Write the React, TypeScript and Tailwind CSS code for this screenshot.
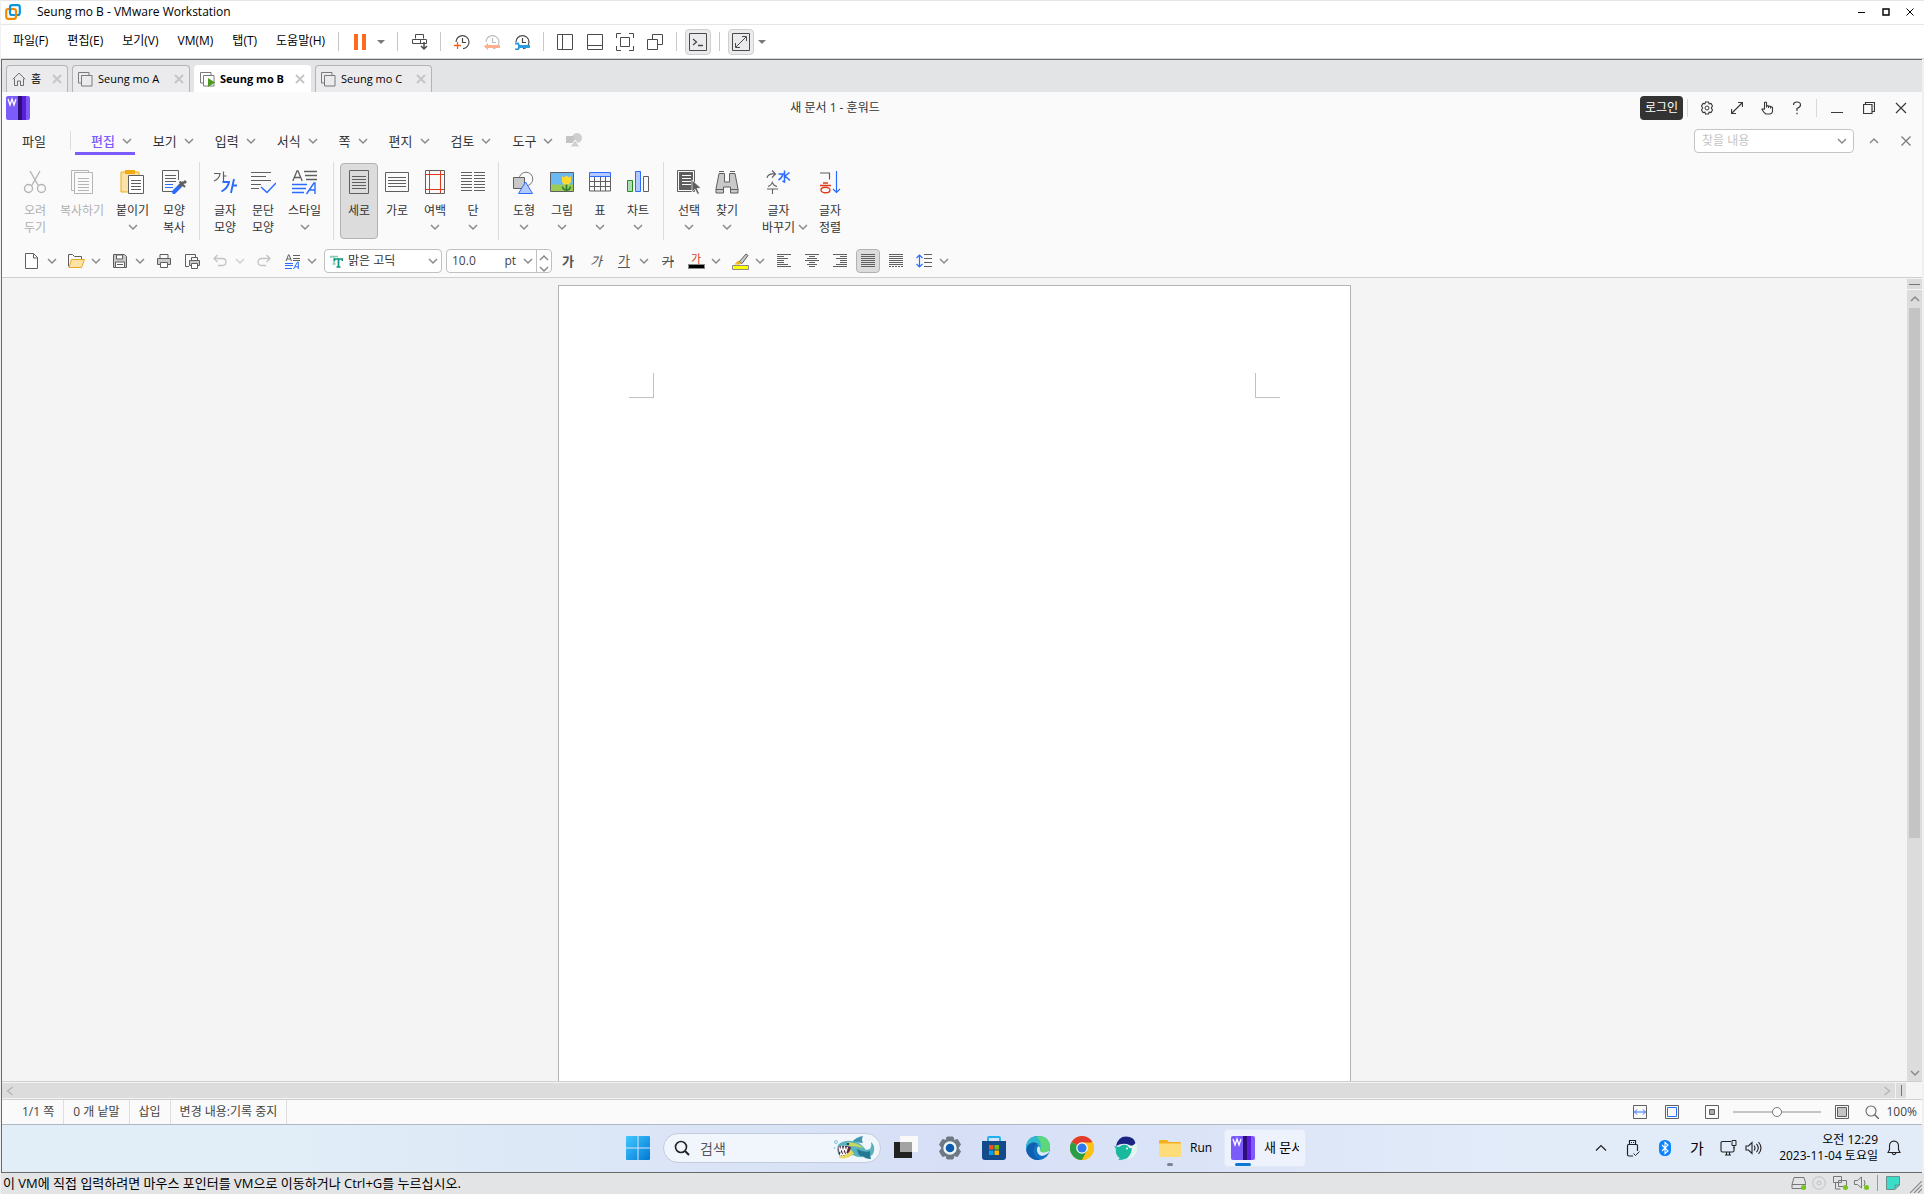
import type { ReactNode } from 'react';
import clsx from 'clsx';

const G = '#5f5f5f';
const BLUE = '#2b6cff';

type IconProps = { w?: number; h?: number; children: ReactNode; className?: string };

function Icon({ w = 16, h = w, children, className }: IconProps) {
  return (
    <svg width={w} height={h} viewBox={`0 0 ${w} ${h}`} fill="none" className={clsx('shrink-0', className)} aria-hidden>
      {children}
    </svg>
  );
}

function Chevron({ color = '#8a8a8a', up = false, className }: { color?: string; up?: boolean; className?: string }) {
  return (
    <Icon w={16} className={className}>
      <path d={up ? 'M4 10l4-4 4 4' : 'M4 6l4 4 4-4'} stroke={color} strokeWidth="1.5" />
    </Icon>
  );
}

function Lines({ x, w, ys, color = G }: { x: number; w: number; ys: number[]; color?: string }) {
  return <path d={ys.map((y) => `M${x} ${y}h${w}`).join('')} stroke={color} />;
}

function WordLogo() {
  return (
    <Icon w={24}>
      <rect width="24" height="24" rx="2" fill="#7b5cfa" />
      <path d="M12 0h4v24h-4z" fill="#2e0f78" />
      <path d="M16 0h4v24h-4z" fill="#5a1ed8" />
      <path d="M2 3l2 6 2-6 2 6 2-6" stroke="#fff" strokeWidth="1.3" />
    </Icon>
  );
}

/* ---------- VMware frame ---------- */

function VmLogo() {
  return (
    <Icon w={16}>
      <rect x="5" y="1.2" width="9.8" height="9.8" rx="2" stroke="#0c95d8" strokeWidth="2.2" />
      <rect x="1.2" y="5" width="9.8" height="9.8" rx="2" stroke="#f38b00" strokeWidth="2.2" />
      <path d="M5 8V4" stroke="#0c95d8" strokeWidth="2.2" />
    </Icon>
  );
}

function VmTitleBar() {
  return (
    <header className="flex h-[25px] items-center border-t border-b border-[#e6e6e6] bg-white pr-[2px] pb-px pl-[4px]">
      <VmLogo />
      <h1 className="flex-1 pl-4 text-[12px] leading-4 text-black">Seung mo B - VMware Workstation</h1>
      <button aria-label="최소화" className="grid h-5 w-6 place-items-center">
        <Icon w={8}><path d="M0 4.5h7" stroke="#000" /></Icon>
      </button>
      <button aria-label="최대화" className="grid h-5 w-6 place-items-center">
        <Icon w={8}><path d="M1 1h6v6H1z" stroke="#000" strokeWidth="1.4" /></Icon>
      </button>
      <button aria-label="닫기" className="grid h-5 w-6 place-items-center">
        <Icon w={8}><path d="M.5.5l7 7m0-7l-7 7" stroke="#000" /></Icon>
      </button>
    </header>
  );
}

const VM_MENUS = ['파일(F)', '편집(E)', '보기(V)', 'VM(M)', '탭(T)', '도움말(H)'];

function VmSep() {
  return <span className="h-[19px] w-px bg-[#c8c8c8]" />;
}

function Caret() {
  return (
    <Icon w={8} h={6}><path d="M0 1h8L4 5z" fill="#7a7a7a" /></Icon>
  );
}

function Clock({ color, children }: { color: string; children: ReactNode }) {
  return (
    <Icon w={16}>
      <path d="M2 8a6.5 6.5 0 1 1 7 6.6M8.500 4v4.500h3.500" stroke={color} strokeWidth="1.2" />
      {children}
    </Icon>
  );
}

function VmButton({ label, boxed, children }: { label: string; boxed?: boolean; children: ReactNode }) {
  return (
    <button
      aria-label={label}
      className={clsx('grid h-[26px] place-items-center', boxed ? 'w-[26px] rounded-[4px] border border-[#cfcfcf] bg-[#ebebed]' : 'w-[30px]')}
    >
      {children}
    </button>
  );
}

function VmMenuBar() {
  const s = '#4a4a4a';
  return (
    <div className="flex h-[34px] items-center border-b border-[#d8d8d8] bg-white pl-3">
      <nav className="flex w-[325px] gap-[19px] pb-px text-[12px] leading-4 text-black">
        {VM_MENUS.map((m) => (
          <button key={m} className="whitespace-nowrap">{m}</button>
        ))}
      </nav>
      <VmSep />
      <div className="flex w-[58px] items-center gap-[10px] pl-[14px]">
        <button aria-label="일시 중단">
          <Icon w={14} h={16}><path d="M1 0h4v16H1zM9 0h4v16H9z" fill="#ff6a1c" /></Icon>
        </button>
        <button aria-label="전원 옵션"><Caret /></button>
      </div>
      <VmSep />
      <div className="flex w-[42px] justify-center">
        <VmButton label="Ctrl+Alt+Del 보내기">
          <Icon w={17} h={18}>
            <path d="M4.500 5.500v-4h8v4M1.500 6.500h8v4h-8zM9.500 6.500h6v4h-6z" stroke={s} />
            <path d="M13 9v6m-3-2l3 3 3-3" stroke={s} strokeWidth="1.500" />
          </Icon>
        </VmButton>
      </div>
      <VmSep />
      <div className="flex w-[102px] justify-center">
        <VmButton label="스냅샷 생성">
          <Clock color={s}><path d="M0 11.500h7M3.500 8v7" stroke="#f5601e" strokeWidth="1.300" /></Clock>
        </VmButton>
        <VmButton label="스냅샷으로 되돌리기">
          <Clock color="#bdbdbd"><path d="M0 12.500l4-3.500v2h12v3H4v2z" fill="#ffb08a" /></Clock>
        </VmButton>
        <VmButton label="스냅샷 관리">
          <Clock color={s}>
            <path d="M4 12.500h12" stroke="#2c9be0" strokeWidth="3" />
            <path d="M1 9.500h3l1.500 3-1.500 3H1" stroke="#2c9be0" strokeWidth="2" />
          </Clock>
        </VmButton>
      </div>
      <VmSep />
      <div className="flex w-[132px] justify-center">
        <VmButton label="라이브러리">
          <Icon w={16}><path d="M.5.500h15v15H.500zM5.500 1v15" stroke={s} /></Icon>
        </VmButton>
        <VmButton label="축소판">
          <Icon w={16}><path d="M.5.500h15v15H.500zM1 11.500h15" stroke={s} /></Icon>
        </VmButton>
        <VmButton label="전체 화면">
          <Icon w={18}>
            <path d="M.5 5V.500H5M13 .500h4.500V5M17.500 13v4.500H13M5 17.500H.500V13M4.500 4.500h9v9h-9z" stroke={s} />
          </Icon>
        </VmButton>
        <VmButton label="유니티">
          <Icon w={16}><path d="M.5 5.500h10v10H.500zM5.500 5V.500h10v10H11" stroke={s} /></Icon>
        </VmButton>
      </div>
      <VmSep />
      <div className="flex w-[42px] justify-center">
        <VmButton label="콘솔 보기" boxed>
          <Icon w={18}>
            <path d="M.5.500h17v17H.500z" stroke={s} />
            <path d="M4 6l3.500 3L4 12M9 12.500h5" stroke={s} strokeWidth="1.300" />
          </Icon>
        </VmButton>
      </div>
      <VmSep />
      <div className="flex items-center gap-1 pl-2">
        <VmButton label="게스트 늘이기" boxed>
          <Icon w={18}>
            <path d="M.5.500h17v17H.500z" stroke={s} />
            <path d="M10 3.500h4.500V8M8 14.500H3.500V10M4 14L14 4" stroke={s} />
          </Icon>
        </VmButton>
        <button aria-label="늘이기 옵션"><Caret /></button>
      </div>
    </div>
  );
}

const VM_TABS = [
  { label: '홈', width: 'w-[62px]', kind: 'home' },
  { label: 'Seung mo A', width: 'w-[118px]', kind: 'vm' },
  { label: 'Seung mo B', width: 'w-[117px]', kind: 'running' },
  { label: 'Seung mo C', width: 'w-[117px]', kind: 'vm' },
];

function VmTabs() {
  return (
    <div className="flex h-[32px] items-end gap-1 bg-[#e3e4e6] pl-1">
      {VM_TABS.map((t) => {
        const active = t.kind === 'running';
        return (
          <div
            key={t.label}
            className={clsx(
              'flex h-[27px] items-center rounded-t-[4px] border border-b-0 px-[5px]',
              t.width,
              active ? 'border-white bg-white' : 'border-[#b4b4b8] bg-[#ebebed]',
            )}
          >
            {t.kind === 'home' ? (
              <Icon w={14}>
                <path d="M.7 7.300L7 1.200l6.300 6.100M2.500 6.500v7h3v-4.500h3v4.500h3v-7" stroke="#6e6e6e" />
              </Icon>
            ) : (
              <Icon w={15}>
                <path d="M3.500 11H.500V.500H11V3M3.500 3.500h10.500v10.500H3.500z" stroke="#7a7a7a" />
                {active && <path d="M8 6l7 4.500L8 15z" fill="#4c9a1f" />}
              </Icon>
            )}
            <button
              className={clsx(
                'flex-1 pl-[5px] text-left text-[11px] leading-4 whitespace-nowrap text-black',
                active && 'font-bold',
              )}
            >
              {t.label}
            </button>
            <button aria-label={`${t.label} 닫기`}>
              <Icon w={10}><path d="M1 1l8 8m0-8L1 9" stroke="#c6c6c6" strokeWidth="2" /></Icon>
            </button>
          </div>
        );
      })}
    </div>
  );
}

/* ---------- Word processor header ---------- */

function WinButton({ label, children }: { label: string; children: ReactNode }) {
  return (
    <button aria-label={label} className="grid h-6 w-[30px] place-items-center">
      {children}
    </button>
  );
}

function DocTitleBar() {
  const s = '#3a3a3a';
  return (
    <div className="flex h-[32px] items-center pr-[5px] pl-1">
      <WordLogo />
      <h2 className="flex-1 text-center text-[12px] leading-4 text-[#333]">새 문서 1 - 훈워드</h2>
      <button className="h-6 w-[43px] rounded-[4px] bg-[#333] text-[12px] leading-4 text-white">로그인</button>
      <span className="mr-1 ml-1 h-[18px] w-px bg-[#d9d9d9]" />
      <WinButton label="설정">
        <Icon w={14}>
          <path d="M5.500 1h3l.6 1.800 1.900-.4 1.500 2.500L11.300 7l1.200 2.100-1.500 2.500-1.900-.4-.6 1.800h-3l-.6-1.800-1.900.4L1.500 9.100 2.700 7 1.500 4.900 3 2.400l1.900.4z" stroke={s} strokeWidth="1.100" />
          <circle cx="7" cy="7" r="2" stroke={s} />
        </Icon>
      </WinButton>
      <WinButton label="전체 화면">
        <Icon w={12}><path d="M7 .500h4.500V5M5 11.500H.500V7M1 11L11 1" stroke={s} strokeWidth="1.200" /></Icon>
      </WinButton>
      <WinButton label="터치 모드">
        <Icon w={14}>
          <path d="M4.500 8.500v-7q1-1 2 0v5M6.500 5q1-.8 2 0v2M8.500 5.500q1-.8 2 0v2M10.500 6q1.500-.5 2 .500v4q-.5 2.500-3 2.500H6Q4 12 2 8.500q-.5-1.500 2.500 0" stroke={s} strokeWidth="1.100" />
        </Icon>
      </WinButton>
      <WinButton label="도움말">
        <Icon w={10} h={14}>
          <path d="M1.500 4Q1.500 1 5 1t3.500 3Q8.500 6 5 7.500V10" stroke={s} strokeWidth="1.200" />
          <path d="M5 11.800v1.500" stroke={s} strokeWidth="1.300" />
        </Icon>
      </WinButton>
      <span className="mr-1 ml-1 h-[18px] w-px bg-[#d9d9d9]" />
      <button aria-label="최소화" className="grid h-6 w-8 place-items-center">
        <Icon w={12}><path d="M0 10.500h12" stroke={s} /></Icon>
      </button>
      <button aria-label="이전 크기로" className="grid h-6 w-8 place-items-center">
        <Icon w={12}><path d="M.5 2.500h8.500v9H.500zM2.500 2V.500h9v9H9.500" stroke={s} strokeWidth="1.200" /></Icon>
      </button>
      <button aria-label="닫기" className="grid h-6 w-8 place-items-center">
        <Icon w={12}><path d="M1 1l10 10m0-10L1 11" stroke={s} strokeWidth="1.200" /></Icon>
      </button>
    </div>
  );
}

const DOC_MENUS = ['편집', '보기', '입력', '서식', '쪽', '편지', '검토', '도구'];

function DocMenuBar() {
  return (
    <div className="flex h-[33px] items-center text-[13px] leading-4 text-[#333]">
      <button className="pr-6 pl-5">파일</button>
      <span className="mr-1 h-[19px] w-px bg-[#dcdcdc]" />
      <nav className="flex items-center gap-[2px]">
        {DOC_MENUS.map((m, i) => (
          <button
            key={m}
            className={clsx(
              'flex h-[28px] items-center gap-1 border-t-[3px] border-b-[3px] border-t-transparent pl-4',
              i === 0 ? 'border-b-[#7c5cfc] font-medium text-[#7c5cfc]' : 'border-b-transparent',
            )}
          >
            <span>{m}</span>
            <Chevron />
          </button>
        ))}
      </nav>
      <Icon w={16} className="ml-[10px]">
        <circle cx="11" cy="5" r="5" fill="#cfcfcf" />
        <path d="M0 3h8v7H0z" fill="#c4c4c4" />
        <path d="M9 7l5 7H4z" fill="#cfcfcf" stroke="#fafafa" />
      </Icon>
      <div className="flex flex-1 items-center justify-end">
        <label className="flex h-6 w-[160px] items-center rounded-[4px] border border-[#c4c4c4] bg-white pr-[3px]">
          <input
            aria-label="찾을 내용"
            placeholder="찾을 내용"
            className="min-w-0 flex-1 pl-[7px] text-[12px] outline-none placeholder:text-[#c4c4c4]"
          />
          <Chevron />
        </label>
        <button aria-label="리본 접기" className="grid w-10 place-items-center"><Chevron up /></button>
        <button aria-label="닫기" className="mr-1 grid w-6 place-items-center">
          <Icon w={10}><path d="M.5.500l9 9m0-9l-9 9" stroke="#777" strokeWidth="1.200" /></Icon>
        </button>
      </div>
    </div>
  );
}

/* ---------- Ribbon ---------- */

const icons: Record<string, ReactNode> = {
  cut: (
    <>
      <path d="M7 1l8.500 15M17 1L8.500 16" stroke="#b5b5b5" strokeWidth="1.400" />
      <circle cx="5.500" cy="18.500" r="4" stroke="#b5b5b5" strokeWidth="1.400" />
      <circle cx="18.500" cy="18.500" r="4" stroke="#b5b5b5" strokeWidth="1.400" />
    </>
  ),
  copy: (
    <>
      <path d="M4.500 20.500h-3V.500h17v2M4.500 2.500h18v21h-18z" stroke="#b5b5b5" />
      <Lines x={8} w={11} ys={[8.5, 11.5, 14.5, 17.5, 20.5]} color="#b5b5b5" />
    </>
  ),
  paste: (
    <>
      <path d="M1 2h18v20H1z" fill="#fbe3a8" stroke="#f0ab14" />
      <path d="M5 0h10v4H5z" fill="#f0ab14" />
      <path d="M8.500 5.500h15v18h-15z" fill="#fff" stroke={G} />
      <Lines x={11} w={10} ys={[10.5, 13.5, 16.5, 19.5]} />
    </>
  ),
  brush: (
    <>
      <path d="M16.500 10V.500H.500v21H11" stroke={G} />
      <Lines x={3} w={11} ys={[5.5, 8.5, 11.5]} />
      <Lines x={3} w={8} ys={[14.5, 17.5]} color={BLUE} />
      <path d="M12 22l7-7" stroke={BLUE} strokeWidth="4" strokeLinecap="round" />
      <path d="M17 16.500l4.500-4.500M22 13l2-2" stroke={G} strokeWidth="3" />
      <path d="M17.500 11.500l5.500 5.500" stroke={G} strokeWidth="2" />
    </>
  ),
  charShape: (
    <>
      <path d="M1 3.500h6Q6.500 9 1 11M10.500 1.500v10M10.500 6h3" stroke={G} strokeWidth="1.200" />
      <path d="M9.500 12h6.500Q15 18 8.500 21.500M21 9l-3 14M20 15.500h4" stroke={BLUE} strokeWidth="1.900" />
    </>
  ),
  paraShape: (
    <>
      <path d="M0 2.500h20M0 6.500h15M0 10.500h20M0 14.500h10M0 18.500h8" stroke={G} />
      <path d="M10 17l6 5.500L25 13" stroke={BLUE} strokeWidth="1.500" />
    </>
  ),
  style: (
    <>
      <path d="M.8 11L5 1h1l4.200 10M2.500 7.500h6.500M12 1.500h13M13 5.500h12M14 9.500h11" stroke={G} strokeWidth="1.300" />
      <path d="M0 14.500h15M0 18.500h14M0 22.500h12M14.500 24L22 13h1v11M17.500 20h5.500" stroke={BLUE} strokeWidth="1.400" />
    </>
  ),
  portrait: (
    <>
      <path d="M2.500.500h19v23h-19z" stroke={G} />
      <Lines x={5} w={14} ys={[6.5, 9.5, 12.5, 15.5, 18.5]} />
    </>
  ),
  landscape: (
    <>
      <path d="M.5 2.500h23v19H.500z" stroke={G} />
      <Lines x={3} w={18} ys={[7.5, 10.5, 13.5, 16.5]} />
    </>
  ),
  margin: (
    <>
      <path d="M2.500.500h19v23h-19z" stroke={G} />
      <path d="M6.500 1v22M17.500 1v22M3 4.500h18M3 19.500h18" stroke="#dd3b1e" />
    </>
  ),
  columns: (
    <>
      <Lines x={0} w={11} ys={[2.5, 5.5, 8.5, 11.5, 14.5, 17.5, 20.5]} />
      <Lines x={13} w={11} ys={[2.5, 5.5, 8.5, 11.5, 14.5, 17.5, 20.5]} />
    </>
  ),
  shapes: (
    <>
      <circle cx="14" cy="9" r="6.800" stroke="#777" />
      <path d="M1.500 7.500h11v11h-11z" fill="#c9c9c9" stroke={G} />
      <path d="M13.500 12l7 11.500h-14z" fill="#b4caff" stroke={BLUE} />
    </>
  ),
  picture: (
    <>
      <path d="M.5 2.500h23v19H.500z" fill="#6bb9f2" stroke={G} />
      <path d="M1 14.500h22V21H1z" fill="#9ccc55" />
      <path d="M16.500 12v9M12.500 16.500q.500 3.500 4 3.500t4-3.500" stroke="#2b7a2b" strokeWidth="1.600" />
      <path d="M12 6l2 1.500 2.500-2 2.500 2L21 6v6l-2 2.500h-5L12 12z" fill="#ffd92e" />
    </>
  ),
  table: (
    <>
      <path d="M1.500 6.500h21v14.500h-21zM6.500 7v14M12.500 7v14M17.500 7v14M2 11.500h20M2 16.500h20" stroke={G} />
      <path d="M1.500 2.500h21v4h-21z" fill="#b4caff" stroke={BLUE} />
    </>
  ),
  chart: (
    <>
      <path d="M1.500 10.500h5v11h-5z" fill="#b4dcb4" stroke="#1f8f1f" />
      <path d="M9.500 1.500h5v20h-5z" fill="#b4caff" stroke={BLUE} />
      <path d="M17.500 6.500h5v15h-5z" stroke={G} />
    </>
  ),
  select: (
    <>
      <path d="M.5.500h17v21H.500z" stroke={G} />
      <path d="M2 2h14v18H2z" fill={G} />
      <Lines x={5} w={9} ys={[5.5, 8.5, 11.5, 14.5]} color="#fff" />
      <path d="M15 10l9 8-4 .500 2.500 5-2 .800-2.500-5-3 2.700z" fill={G} stroke="#fafafa" strokeWidth=".7" />
    </>
  ),
  find: (
    <path d="M4 1.500h5M15 1.500h5M4 3.500h5.500V12h5V3.500H20L23 19v4h-7.500v-6h-7v6H1v-4zM1 19.500h7.500M15.500 19.500H23" fill="#c9c9c9" stroke={G} />
  ),
  hanja: (
    <>
      <path d="M1 8Q2 3 9 4M6 .500L9.500 4 6 7.500M1 19h11M6.500 19v5M6.500 11.500Q6 15 2 16.500M6.500 13q1 2.500 4.500 3.500" stroke={G} strokeWidth="1.100" />
      <path d="M18.500.500v11.500l-2-1M12.500 4h4.500q-1 4-4.500 6M23.500 2.500L19 6l5 4.500" stroke={BLUE} strokeWidth="1.500" />
    </>
  ),
  sort: (
    <>
      <path d="M2 3h9.500v6.500" stroke={G} strokeWidth="1.200" />
      <path d="M5 13h5M2 15.500h11" stroke="#dd3b1e" strokeWidth="1.300" />
      <ellipse cx="7.500" cy="20" rx="4.500" ry="2.800" stroke="#dd3b1e" strokeWidth="1.400" />
      <path d="M18.500 1v21M15 19l3.500 3.500L22 19" stroke={BLUE} strokeWidth="1.200" />
    </>
  ),
};

type RibbonItem = {
  icon: string;
  lines: [string, string?];
  width?: string;
  disabled?: boolean;
  active?: boolean;
  menu?: boolean;
};

const RIBBON: RibbonItem[][] = [
  [
    { icon: 'cut', lines: ['오려', '두기'], disabled: true },
    { icon: 'copy', lines: ['복사하기'], width: 'w-[56px]', disabled: true },
    { icon: 'paste', lines: ['붙이기'], width: 'w-[45px]', menu: true },
    { icon: 'brush', lines: ['모양', '복사'] },
  ],
  [
    { icon: 'charShape', lines: ['글자', '모양'] },
    { icon: 'paraShape', lines: ['문단', '모양'] },
    { icon: 'style', lines: ['스타일'], width: 'w-[45px]', menu: true },
  ],
  [
    { icon: 'portrait', lines: ['세로'], active: true },
    { icon: 'landscape', lines: ['가로'] },
    { icon: 'margin', lines: ['여백'], menu: true },
    { icon: 'columns', lines: ['단'], menu: true },
  ],
  [
    { icon: 'shapes', lines: ['도형'], menu: true },
    { icon: 'picture', lines: ['그림'], menu: true },
    { icon: 'table', lines: ['표'], menu: true },
    { icon: 'chart', lines: ['차트'], menu: true },
  ],
  [
    { icon: 'select', lines: ['선택'], menu: true },
    { icon: 'find', lines: ['찾기'], menu: true },
    { icon: 'hanja', lines: ['글자', '바꾸기'], width: 'w-[65px]', menu: true },
    { icon: 'sort', lines: ['글자', '정렬'] },
  ],
];

function Ribbon() {
  return (
    <div className="flex h-[87px] items-center pl-[14px]">
      {RIBBON.map((group, g) => (
        <div key={g} className="flex items-center">
          {g > 0 && <span className="mx-[6px] h-[78px] w-px bg-[#dcdcdc]" />}
          {group.map((it) => (
            <button
              key={it.icon}
              disabled={it.disabled}
              className={clsx(
                'flex h-[76px] flex-col items-center rounded-[4px] border pt-[6px] text-[12px] leading-[17px]',
                it.width ?? 'w-[38px]',
                it.active ? 'border-[#b2b2b2] bg-[#dcdcdc]' : 'border-transparent',
                it.disabled ? 'text-[#b0b0b0]' : 'text-[#333]',
              )}
            >
              <Icon w={25} className="mb-[7px]">{icons[it.icon]}</Icon>
              <span className="whitespace-nowrap">{it.lines[0]}</span>
              <span className="flex h-[17px] items-center whitespace-nowrap">
                {it.lines[1]}
                {it.menu && <Chevron className={it.lines[1] ? '-mr-4' : ''} />}
              </span>
            </button>
          ))}
        </div>
      ))}
    </div>
  );
}

/* ---------- Formatting bar ---------- */

function Tool({ label, menu, active, disabled, children }: {
  label: string;
  menu?: boolean;
  active?: boolean;
  disabled?: boolean;
  children: ReactNode;
}) {
  return (
    <div className="flex items-center">
      <button
        aria-label={label}
        disabled={disabled}
        className={clsx('grid h-6 w-6 place-items-center rounded-[4px] border text-[13px] leading-none text-[#555]', active ? 'border-[#b2b2b2] bg-[#dcdcdc]' : 'border-transparent')}
      >
        {children}
      </button>
      {menu && (
        <button aria-label={`${label} 옵션`}>
          <Chevron color={disabled ? '#cfcfcf' : undefined} />
        </button>
      )}
    </div>
  );
}

function AlignIcon({ d, dashed }: { d: string; dashed?: boolean }) {
  return (
    <Icon w={14}>
      <path d={d} stroke={G} />
      {dashed && <path d="M0 12.500h14" stroke={G} strokeDasharray="2 1" />}
    </Icon>
  );
}

function FormatBar() {
  return (
    <div className="flex h-[34px] items-center gap-1 border-b border-[#d0d0d0] pt-px pl-[18px]">
      <Tool label="새 문서" menu>
        <Icon w={14} h={16}><path d="M.5.500h8l4 4v11H.500zM8.500 1v4h4" stroke={G} fill="#fff" /></Icon>
      </Tool>
      <Tool label="열기" menu>
        <Icon w={17} h={14}>
          <path d="M.5 12.500v-12h4l2 2h7v3" stroke={G} />
          <path d="M3.500 5.500h13l-3 8H1z" fill="#fbe3a8" stroke="#e8a91c" />
        </Icon>
      </Tool>
      <Tool label="저장" menu>
        <Icon w={14}>
          <path d="M.5.500h11l2 2v11H.500z" fill="#c9c9c9" stroke={G} />
          <path d="M3.500 1h6v4h-6zM2.500 8h9v5.500h-9z" fill="#fff" stroke={G} />
          <Lines x={4} w={6} ys={[10.5]} />
        </Icon>
      </Tool>
      <Tool label="인쇄">
        <Icon w={14}>
          <path d="M3 4.500v-4h8v4" stroke={G} />
          <path d="M.5 4.500h13v6H.500z" fill="#c9c9c9" stroke={G} />
          <path d="M3.500 8.500h7v5h-7z" fill="#fff" stroke={G} />
        </Icon>
      </Tool>
      <Tool label="미리 보기">
        <Icon w={15}>
          <path d="M4 12.500H.500V.500h10V3" stroke={G} />
          <path d="M6.500 6V3.500h6V6" stroke={G} />
          <path d="M4.500 6.500h10v5h-10z" fill="#c9c9c9" stroke={G} />
          <path d="M6.500 9.500h6v5h-6z" fill="#fff" stroke={G} />
        </Icon>
      </Tool>
      <Tool label="되돌리기" menu disabled>
        <Icon w={14}><path d="M4.500 1L1 4.500 4.500 8M1 4.500h8q4 0 4 3.500t-4 3.500H5" stroke="#c4c4c4" strokeWidth="1.300" /></Icon>
      </Tool>
      <Tool label="다시 실행" disabled>
        <Icon w={14}><path d="M9.500 1L13 4.500 9.500 8M13 4.500H5Q1 4.500 1 8t4 3.500h4" stroke="#c4c4c4" strokeWidth="1.300" /></Icon>
      </Tool>
      <Tool label="스타일" menu>
        <Icon w={15}>
          <path d="M1 7L3.500.800h.5L6.500 7M2 5h4M8 1.500h7M8 4.500h7M8 6.500h7" stroke={G} />
          <path d="M0 9.500h8M0 11.500h8M0 14.500h7M8.500 15L12.500 8h.8v7M10 12.800h3.500" stroke={BLUE} />
        </Icon>
      </Tool>

      <label className="flex h-6 w-[118px] items-center rounded-[4px] border border-[#c0c0c0] bg-white pl-[5px]">
        <Icon w={13}>
          <path d="M0 1.500h8M4 1v8M1 1v2M2.500 9h3" stroke="#86cdb4" strokeWidth="1.600" />
          <path d="M4 4h9M8.500 4v8M4.500 4v2M12.500 4v2M6.500 12h4" stroke="#12917c" strokeWidth="1.700" />
        </Icon>
        <select aria-label="글꼴" className="min-w-0 flex-1 appearance-none pl-[5px] text-[12px] text-[#333] outline-none">
          <option>맑은 고딕</option>
        </select>
        <Chevron />
      </label>

      <div className="flex h-6 w-[106px] items-center rounded-[4px] border border-[#c0c0c0] bg-white text-[12px] text-[#444]">
        <input aria-label="글자 크기" defaultValue="10.0" className="min-w-0 flex-1 pl-[5px] outline-none" />
        <span>pt</span>
        <button aria-label="크기 목록" className="ml-1"><Chevron /></button>
        <span className="flex h-full w-[15px] flex-col items-center border-l border-[#c0c0c0]">
          <button aria-label="크게" className="grid h-[11px] place-items-center overflow-hidden"><Chevron up /></button>
          <button aria-label="작게" className="grid h-[11px] place-items-center overflow-hidden"><Chevron /></button>
        </span>
      </div>

      <Tool label="진하게"><b>가</b></Tool>
      <Tool label="기울임"><i>가</i></Tool>
      <Tool label="밑줄" menu><span className="border-b border-[#555]">가</span></Tool>
      <Tool label="취소선"><s>가</s></Tool>
      <Tool label="글자 색" menu>
        <span className="flex flex-col items-center text-[11px] leading-[11px] text-[#dd3b1e]">
          가
          <span className="h-[5px] w-[17px] border border-[#888] bg-black" />
        </span>
      </Tool>
      <Tool label="형광펜" menu>
        <Icon w={17} h={17}>
          <path d="M7 9l7-8 2 1.500-6 8z" fill="#c9c9c9" stroke={G} />
          <path d="M6 7.500L2.500 11.500H8L9 10z" fill="#f5b324" />
          <path d="M.5 12.500h16v4H.500z" fill="#ffff00" stroke="#8a8a8a" />
        </Icon>
      </Tool>
      <Tool label="왼쪽 정렬"><AlignIcon d="M0 .500h14M0 2.500h7M0 4.500h11M0 6.500h7M0 8.500h7M0 10.500h11M0 12.500h14" /></Tool>
      <Tool label="가운데 정렬"><AlignIcon d="M0 .500h14M4 2.500h6M2 4.500h10M0 6.500h14M4 8.500h6M2 10.500h10M4 12.500h6" /></Tool>
      <Tool label="오른쪽 정렬"><AlignIcon d="M0 .500h14M7 2.500h7M3 4.500h11M7 6.500h7M7 8.500h7M3 10.500h11M0 12.500h14" /></Tool>
      <Tool label="양쪽 정렬" active><AlignIcon d="M0 .500h14M0 2.500h14M0 4.500h14M0 6.500h14M0 8.500h14M0 10.500h14M0 12.500h14" /></Tool>
      <Tool label="배분 정렬"><AlignIcon d="M0 .500h14M0 2.500h14M0 4.500h14M0 6.500h14M0 8.500h14M0 10.500h14" dashed /></Tool>
      <Tool label="줄 간격" menu>
        <Icon w={16} h={14}>
          <path d="M3.500 1v12M.500 4l3-3 3 3M.500 10l3 3 3-3" stroke={BLUE} strokeWidth="1.200" />
          <Lines x={8} w={8} ys={[0.5, 4.5, 8.5, 12.5]} />
        </Icon>
      </Tool>
    </div>
  );
}

/* ---------- Canvas and status ---------- */

function Workspace() {
  return (
    <div className="flex min-h-0 flex-1 bg-[#f4f4f4]">
      <main className="flex flex-1 justify-center overflow-hidden pt-[7px]">
        <div className="flex w-[793px] items-start justify-between border border-b-0 border-[#b3b3b3] bg-white px-[70px] pt-[87px]">
          <span className="h-[25px] w-[25px] border-r border-b border-[#c0c0c0]" />
          <span className="h-[25px] w-[25px] border-b border-l border-[#c0c0c0]" />
        </div>
      </main>
      <div className="flex w-[15px] flex-col bg-[#dcdcdc]">
        <button aria-label="화면 나누기" className="grid h-[12px] place-items-center border-t border-b border-[#f4f4f4]">
          <span className="h-px w-[11px] bg-[#777]" />
        </button>
        <button aria-label="위로" className="grid h-[18px] place-items-center overflow-hidden"><Chevron up /></button>
        <div className="flex-1 px-[2px]"><div className="h-[70%] bg-[#c4c4c4]" /></div>
        <button aria-label="아래로" className="grid h-4 place-items-center"><Chevron /></button>
      </div>
    </div>
  );
}

function HScroll() {
  return (
    <div className="flex h-[19px] items-center border-t border-b border-[#cfcfcf] bg-[#f4f4f4] py-px">
      <div className="flex h-full flex-1 items-center justify-between bg-[#dcdcdc] px-1">
        <Icon w={8} h={10}><path d="M6.500 1L1.500 5l5 4" stroke="#b4b4b4" strokeWidth="1.300" /></Icon>
        <Icon w={8} h={10}><path d="M1.500 1l5 4-5 4" stroke="#b4b4b4" strokeWidth="1.300" /></Icon>
      </div>
      <div className="mr-4 ml-px grid h-full w-[10px] place-items-center bg-[#dcdcdc]">
        <span className="h-[11px] w-px bg-[#777]" />
      </div>
    </div>
  );
}

function StatusCell({ children, first }: { children: ReactNode; first?: boolean }) {
  return (
    <span className={clsx('flex h-full items-center border-r border-[#dedede] pr-[9px]', first ? 'pl-5' : 'pl-[9px]')}>
      {children}
    </span>
  );
}

function DocStatus() {
  return (
    <footer className="flex h-[24px] items-center bg-[#fafafa] text-[12px] leading-4 text-[#444]">
      <StatusCell first>1/1 쪽</StatusCell>
      <StatusCell>0 개 낱말</StatusCell>
      <StatusCell>삽입</StatusCell>
      <StatusCell>변경 내용:기록 중지</StatusCell>
      <div className="flex flex-1 items-center justify-end pr-[5px]">
        <button aria-label="폭 맞춤" className="mr-[18px]">
          <Icon w={14}>
            <path d="M.5.500h13v13H.500z" stroke={G} />
            <path d="M1.500 7h11M4 4.500L1.500 7 4 9.500M10 4.500L12.500 7 10 9.500" stroke={BLUE} />
          </Icon>
        </button>
        <button aria-label="쪽 맞춤" className="mr-[26px]">
          <Icon w={14}>
            <path d="M.5.500h13v13H.500z" stroke={G} />
            <path d="M2.500 2.500h9v9h-9z" stroke={BLUE} />
          </Icon>
        </button>
        <button aria-label="축소" className="mr-[14px]">
          <Icon w={14}>
            <path d="M.5.500h13v13H.500z" stroke={G} />
            <path d="M4.500 4.500h5v5h-5z" fill="#aaa" stroke={G} />
          </Icon>
        </button>
        <input
          type="range"
          aria-label="확대/축소"
          defaultValue={50}
          className="mr-[14px] h-[10px] w-[88px] appearance-none bg-transparent [&::-webkit-slider-runnable-track]:h-[2px] [&::-webkit-slider-runnable-track]:bg-[#c4c4c4] [&::-webkit-slider-thumb]:-mt-1 [&::-webkit-slider-thumb]:h-[10px] [&::-webkit-slider-thumb]:w-[10px] [&::-webkit-slider-thumb]:appearance-none [&::-webkit-slider-thumb]:rounded-full [&::-webkit-slider-thumb]:border [&::-webkit-slider-thumb]:border-[#777] [&::-webkit-slider-thumb]:bg-white"
        />
        <button aria-label="확대" className="mr-4">
          <Icon w={14}>
            <path d="M.5.500h13v13H.500z" stroke={G} />
            <path d="M2.500 2.500h9v9h-9z" fill="#c4c4c4" stroke={G} />
          </Icon>
        </button>
        <button className="flex items-center gap-[7px]">
          <Icon w={14}><circle cx="6" cy="6" r="5" stroke="#666" strokeWidth="1.100" /><path d="M9.500 9.500L14 14" stroke="#666" strokeWidth="1.500" /></Icon>
          <span className="w-[31px] text-right">100%</span>
        </button>
      </div>
    </footer>
  );
}

/* ---------- Taskbar ---------- */

function TaskIcon({ label, children }: { label: string; children: ReactNode }) {
  return (
    <button aria-label={label} className="grid h-10 w-11 place-items-center">
      {children}
    </button>
  );
}

function Fish() {
  return (
    <Icon w={42} h={24}>
      <path d="M19 6q4-5 11-6-2 4 0 7z" fill="#3f97ae" />
      <path d="M5 9Q10 4 19 5t14 9l4-1q2-3 1-7 4 3 3 9-1 6-6 5-8 3-15-1-7 3-14 0Q3 14 5 9z" fill="#5ab2be" />
      <path d="M14 6q10 0 17 6-8-2-17-2z" fill="#c3d765" />
      <path d="M24 13q7 4 13 2 0 5 1 8-6 0-8-3-5 1-6-7z" fill="#257891" />
      <path d="M5 11q6-2 13 0l-2 7q-5 4-10 1z" fill="#5d2a3d" />
      <path d="M6 11l1 5 1.500-5 1.500 5 1.500-5 1.500 5 1.500-5M7 20l1-3 1.500 3 1.500-3 1.500 3 1.500-3" stroke="#fff" strokeWidth="1.200" />
      <path d="M6 19.500q7 2 12-6l3 4q-8 7-15 4z" fill="#e6d75d" />
      <circle cx="15" cy="8" r="1.200" fill="#123f52" />
      <circle cx="3" cy="6" r="1.500" stroke="#7ec4ea" />
      <circle cx="1.500" cy="12" r="1" fill="#9cd3f0" />
    </Icon>
  );
}

function Taskbar() {
  return (
    <div className="grid h-[49px] grid-cols-[1fr_auto_1fr] items-center border-t border-b border-t-[#b0b8c4] border-b-[#6a6a6a] bg-linear-to-r from-[#e1edf7] from-15% via-[#d6dff6] via-50% to-[#e2ecf9] to-80% pr-[2px] pb-px">
      <span />
      <div className="flex items-center">
        <TaskIcon label="시작">
          <Icon w={24}>
            <defs>
              <linearGradient id="win" x1="0" y1="0" x2="1" y2="1" gradientUnits="objectBoundingBox">
                <stop stopColor="#42c8ff" /><stop offset="1" stopColor="#0078d4" />
              </linearGradient>
            </defs>
            <path d="M0 1q0-1 1-1h10.500v11.500H0zM12.500 0H23q1 0 1 1v10.500H12.500zM0 12.500h11.500V24H1q-1 0-1-1zM12.500 12.500H24V23q0 1-1 1H12.500z" fill="url(#win)" />
          </Icon>
        </TaskIcon>
        <label className="mx-[3px] flex h-[30px] w-[218px] items-center rounded-full border border-[#c3cbdc] bg-[#f1f5fc] pr-[5px] pl-[10px]">
          <Icon w={16}><circle cx="7" cy="7" r="5.500" stroke="#222" strokeWidth="1.600" /><path d="M11 11l4 4" stroke="#222" strokeWidth="2" /></Icon>
          <input aria-label="검색" placeholder="검색" className="min-w-0 flex-1 pl-[10px] text-[14px] outline-none placeholder:text-[#555]" />
          <Fish />
        </label>
        <TaskIcon label="작업 보기">
          <Icon w={24}>
            <path d="M0 6h18v16H0z" fill="#222" />
            <path d="M6 0h18v16H6z" fill="#fafafa" />
            <path d="M6 6h12v10H6z" fill="#a3a3a3" />
          </Icon>
        </TaskIcon>
        <TaskIcon label="설정">
          <Icon w={24}>
            <path d="M9 1h6l1 3.500 3.500-1 3 5-2.500 3.500 2.500 3.500-3 5-3.500-1L15 23H9l-1-3.500-3.500 1-3-5L4 12 1.500 8.500l3-5 3.500 1z" fill="#6d7883" stroke="#6d7883" strokeLinejoin="round" />
            <circle cx="12" cy="12" r="5.500" fill="#0b5cad" stroke="#eef3f8" strokeWidth="2.400" />
          </Icon>
        </TaskIcon>
        <TaskIcon label="스토어">
          <Icon w={24}>
            <path d="M6 6V2q0-1 1-1h10q1 0 1 1v4" stroke="#1cb0ee" strokeWidth="1.800" />
            <path d="M0 5h24v16q0 3-3 3H3q-3 0-3-3z" fill="#124a8b" />
            <path d="M7 9h4.500v4.500H7z" fill="#f25022" /><path d="M12.500 9H17v4.500h-4.500z" fill="#7fba00" />
            <path d="M7 14.500h4.500V19H7z" fill="#00a4ef" /><path d="M12.500 14.500H17V19h-4.500z" fill="#ffb900" />
          </Icon>
        </TaskIcon>
        <TaskIcon label="Edge">
          <Icon w={24}>
            <circle cx="12" cy="12" r="12" fill="#1273c4" />
            <path d="M0 11Q1 0 12 0t12 11q0 6-6 6-5 0-4-3 1-5-4-6-6 0-10 6z" fill="#2eb8d0" />
            <path d="M14 0q10 1 10 11 0 6-6 6-5 0-4-3 3-7-3-13z" fill="#5dd77a" />
            <path d="M2 9q5-5 10-1-5 1-4.500 7.500Q8 21 14 23.800 5 25 1 17-.5 13 2 9z" fill="#0f5eb0" />
            <path d="M12.500 10q-3 3-.5 7.500 3.500 5 10.500-.5l1-2.500q-3 2.500-6.500 2-4-1-3-3.500.5-2-1.500-3z" fill="#dfe8f8" />
          </Icon>
        </TaskIcon>
        <TaskIcon label="Chrome">
          <Icon w={24}>
            <circle cx="12" cy="12" r="12" fill="#fbc116" />
            <path d="M12 12L1.600 6A12 12 0 0 1 22.400 6z" fill="#e33b2e" />
            <path d="M12 12L1.600 6A12 12 0 0 0 12 24l5-9z" fill="#2a9d47" />
            <path d="M12 6.500h10.700A12 12 0 0 1 12 24l5-9z" fill="#fbc116" />
            <circle cx="12" cy="12" r="5.800" fill="#fff" /><circle cx="12" cy="12" r="4.600" fill="#3178ea" />
          </Icon>
        </TaskIcon>
        <TaskIcon label="Whale">
          <Icon w={24}>
            <path d="M12 8q7 1 10-3 2 5 1 10-2 7-10 8z" fill="#e4f5f1" />
            <path d="M2 10Q4 .500 12 .500q8 0 9.500 6.500-3 4-6 2Q9 6 2 10z" fill="#1b2384" />
            <path d="M0 10l5 1q5-4 9-1 1 3 4 2-1 9-7 11-3 1-7 1 2-1 1.500-2Q1 19 2 13z" fill="#19b99d" />
            <circle cx="13" cy="12.500" r="1" fill="#fff" />
          </Icon>
        </TaskIcon>
        <button className="relative flex h-10 w-[74px] items-center gap-[9px] pl-[11px] text-[12px] text-black">
          <Icon w={22} h={18}>
            <path d="M0 2q0-1 1-1h7l2 2h11q1 0 1 1v3H0z" fill="#f2b01e" />
            <path d="M0 4.500h22V17q0 1-1 1H1q-1 0-1-1z" fill="#ffdc7a" />
          </Icon>
          Run
          <span className="absolute bottom-[2px] left-[19px] h-[3px] w-[6px] rounded-full bg-[#7d8490]" />
        </button>
        <button className="relative ml-[2px] flex h-[38px] w-[82px] items-center gap-[9px] rounded-[4px] border border-[#e4e9f6] bg-[#eef2fc] pl-[6px] text-[13px] whitespace-nowrap text-black">
          <WordLogo />
          <span className="w-[35px] overflow-hidden text-left">새 문서</span>
          <span className="absolute bottom-0 left-[10px] h-[3px] w-4 rounded-full bg-[#0a78d7]" />
        </button>
      </div>
      <div className="flex items-center justify-end pr-[19px] text-black">
        <button aria-label="숨겨진 아이콘" className="grid w-8 place-items-center">
          <Icon w={12} h={8}><path d="M1 6.500l5-5 5 5" stroke="#222" strokeWidth="1.200" /></Icon>
        </button>
        <button aria-label="USB" className="grid w-8 place-items-center">
          <Icon w={14} h={17}>
            <path d="M3.500.500h6v4h-6zM1.500 5.500q0-1 1-1h8q1 0 1 1V11M1.500 5.500v9q0 1.500 1.500 1.500h4" stroke="#222" strokeWidth="1.200" />
            <path d="M7.500 13.500l2 2 4-4M5 2.500h1M7 2.500h1" stroke="#222" />
          </Icon>
        </button>
        <button aria-label="Bluetooth" className="grid w-8 place-items-center">
          <Icon w={12} h={16}>
            <rect width="12" height="16" rx="5.500" fill="#0a84ff" />
            <path d="M3 5l6 6-3 2.500v-11L9 5l-6 6" stroke="#fff" strokeWidth="1.100" />
          </Icon>
        </button>
        <button className="w-8 text-center text-[15px] leading-none">가</button>
        <button className="flex w-14 items-center justify-center gap-2" aria-label="네트워크 및 볼륨">
          <Icon w={17} h={16}>
            <path d="M11 1.500H2.500q-1.500 0-1.500 1v8q0 1.500 1.500 1.500h10q1.500 0 1.500-1.500V7M5 15h6M6.500 12v3M9.500 12v3" stroke="#222" strokeWidth="1.100" />
            <path d="M12 .500h4v5h-4zM14 5.500v3" stroke="#222" />
          </Icon>
          <Icon w={17} h={14}>
            <path d="M1 5h2.500L7 1.500v11L3.500 9H1zM9 4.500q2 2.500 0 5M11.500 2.800q3.500 4.200 0 8.400M13.500 1q5 6 0 12" stroke="#222" strokeWidth="1.100" />
          </Icon>
        </button>
        <p className="w-[109px] text-right text-[12px] leading-4 whitespace-nowrap">
          오전 12:29
          <br />
          2023-11-04 토요일
        </p>
        <button aria-label="알림" className="ml-[9px]">
          <Icon w={14} h={16}>
            <path d="M1 12.500l1.500-3V6q0-4.500 4.500-5 4.500.500 4.500 5v3.500l1.500 3zM5 13q2 3.500 4 0" stroke="#222" strokeWidth="1.100" />
          </Icon>
        </button>
      </div>
    </div>
  );
}

function VmStatus() {
  const dot = <circle cx="12.500" cy="11.500" r="2.500" fill="#79c41b" />;
  return (
    <footer className="flex h-[21px] items-center bg-[#e3e4e6] pr-[2px] pb-px pl-[2px] text-[13px] leading-4 text-black">
      <p className="flex-1">이 VM에 직접 입력하려면 마우스 포인터를 VM으로 이동하거나 Ctrl+G를 누르십시오.</p>
      <div className="flex items-center gap-[6px]">
        <Icon w={15} h={14}><path d="M3 1.500h10l2 7v4H1v-4zM1 8.500h14" stroke="#777" />{dot}</Icon>
        <Icon w={15} h={14}><circle cx="7" cy="7" r="6.300" stroke="#c0c0c0" /><circle cx="7" cy="7" r="2" stroke="#c0c0c0" /></Icon>
        <Icon w={15} h={14}><path d="M.5.500h8v6h-8zM5.500 4.500h8v6h-8zM2.500 7v6h5" stroke="#777" />{dot}</Icon>
        <Icon w={15} h={14}><path d="M.500 4.500h3l4-3.500v11l-4-3.500h-3zM10 4q2 3 0 6" stroke="#777" />{dot}</Icon>
        <span className="ml-[2px] h-4 w-px bg-[#999]" />
        <Icon w={14} className="ml-[2px]"><path d="M.5.500h13V9L9 13.500H.500z" fill="#39ddc8" stroke="#6a8f8c" /><path d="M9 13V9h4.500" stroke="#6a8f8c" /></Icon>
      </div>
      <Icon w={12} className="ml-[10px] self-end"><path d="M0 12L12 0M4 12l8-8M8 12l4-4" stroke="#8a8a8a" strokeWidth="1.200" /></Icon>
    </footer>
  );
}

export default function App() {
  return (
    <div className="flex h-screen flex-col bg-[#f0f0f0] pl-px font-['Open_Sans','Noto_Sans_CJK_KR',sans-serif]">
      <VmTitleBar />
      <VmMenuBar />
      <div className="mr-[2px] flex min-h-0 flex-1 flex-col border-t border-l border-[#6a6a6a]">
        <VmTabs />
        <section className="bg-[#fafafa]">
          <DocTitleBar />
          <DocMenuBar />
          <Ribbon />
          <FormatBar />
        </section>
        <Workspace />
        <HScroll />
        <DocStatus />
        <Taskbar />
      </div>
      <VmStatus />
    </div>
  );
}
